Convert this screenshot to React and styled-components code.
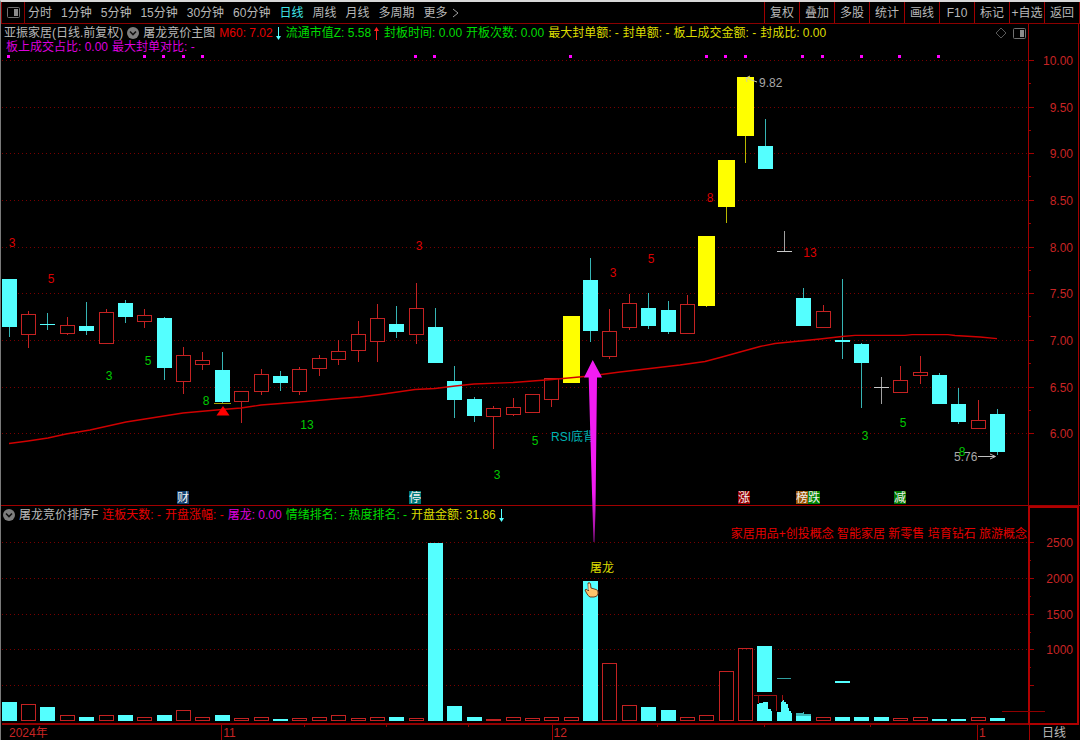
import styled, { createGlobalStyle } from "styled-components";

const GlobalStyle = createGlobalStyle`
  * {
    box-sizing: border-box;
  }
  body {
    margin: 0;
    background: #000;
    color: #b4b4b4;
    font-family: "Liberation Sans", "Noto Sans CJK SC", sans-serif;
    font-size: 12px;
  }
`;

const colors = {
  grey: "#b8b8b8",
  red: "#e60000",
  green: "#00dc00",
  yellow: "#dcdc00",
  magenta: "#dc00dc",
  cyan: "#54ffff",
};

const Window = styled.div`
  display: flex;
  flex-direction: column;
  border-top: 2px solid #d8d8d8;
  border-left: 1px solid #7a7a7a;
`;

const Toolbar = styled.nav`
  display: flex;
  justify-content: space-between;
  height: 22px;
  border: solid #8c0000;
  border-width: 0 1px 1px 1px;
`;
const Periods = styled.div`
  display: flex;
  gap: 9px;
`;
const Tools = styled.div`
  display: flex;
`;
const BarButton = styled.button`
  padding: 0;
  border: 0;
  background: none;
  font: inherit;
  line-height: 22px;
  white-space: nowrap;
  color: ${(props) => (props.$active ? "#3fe6e6" : "#b8b8b8")};
`;
const LayoutButton = styled(BarButton)`
  display: flex;
  align-items: center;
  justify-content: center;
  width: 23px;
  margin-right: -6px;
  border-right: 1px solid #8c0000;
`;
const MoreButton = styled(BarButton)`
  display: flex;
  align-items: center;
  gap: 4px;
`;
const ToolButton = styled(BarButton)`
  width: 35px;
  border-left: 1px solid #a00000;
`;

/* header text and drawing share one grid cell */
const Panel = styled.section`
  display: grid;
  grid-template-columns: 1fr;
  position: relative;
  z-index: ${(props) => props.$level};
`;
const Chart = styled.svg`
  grid-area: 1 / 1;
  display: block;
  width: 100%;
  height: auto;
  overflow: visible;
`;
const Header = styled.header`
  grid-area: 1 / 1;
  z-index: 1;
  align-self: start;
  padding: 2px 0 0 ${(props) => props.$inset}px;
`;
const Line = styled.div`
  display: flex;
  align-items: center;
  gap: 4px;
  height: 14px;
  padding-left: ${(props) => props.$indent || 0}px;
  line-height: 14px;
  white-space: nowrap;
`;
const Field = styled.span`
  display: flex;
  align-items: center;
  gap: 2px;
  color: ${(props) => colors[props.$tone]};
`;
const IconButton = styled.button`
  display: flex;
  padding: 0;
  border: 0;
  background: none;
`;
const Corner = styled.div`
  display: flex;
  align-items: center;
  gap: 6px;
  margin-left: auto;
  padding-right: 54px;
`;

const TimeAxis = styled.footer`
  display: grid;
  grid-template-columns: 220fr 330fr 425fr 52fr 51fr;
  height: 15px;
`;
const Month = styled.span`
  padding-left: ${(props) => props.$pad}px;
  border-left: 1px solid ${(props) => (props.$first ? "transparent" : "#a00000")};
  color: #c82424;
  line-height: 16px;
`;
const PeriodName = styled(Month)`
  color: #b8b8b8;
`;

const centerOf = (i) => Math.round(9 + i * 19.38 - 0.3);

// kind, high, body top, body bottom, low
const candles = [
  ["c", 279, 279, 327, 337],
  ["r", 311, 314, 335, 348],
  ["c", 313, 324, 325, 330],
  ["r", 317, 325, 334, 335],
  ["c", 302, 326, 331, 335],
  ["r", 309, 312, 344, 344],
  ["c", 300, 303, 317, 323],
  ["r", 309, 315, 322, 328],
  ["c", 317, 318, 368, 380],
  ["r", 347, 355, 382, 394],
  ["r", 352, 360, 365, 370],
  ["c", 352, 370, 402, 403],
  ["r", 391, 391, 402, 423],
  ["r", 369, 374, 392, 395],
  ["c", 371, 376, 383, 391],
  ["r", 367, 369, 392, 395],
  ["r", 355, 358, 369, 376],
  ["r", 340, 351, 360, 365],
  ["r", 321, 334, 351, 362],
  ["r", 304, 318, 342, 362],
  ["c", 306, 324, 332, 338],
  ["r", 283, 308, 335, 344],
  ["c", 308, 327, 363, 363],
  ["c", 366, 381, 400, 418],
  ["c", 397, 399, 416, 422],
  ["r", 406, 408, 417, 449],
  ["r", 398, 407, 415, 416],
  ["r", 394, 394, 413, 413],
  ["r", 378, 378, 400, 407],
  ["y", 316, 316, 383, 383],
  ["c", 258, 280, 331, 342],
  ["r", 309, 331, 357, 359],
  ["r", 294, 303, 328, 330],
  ["c", 293, 308, 326, 329],
  ["c", 301, 310, 332, 334],
  ["r", 295, 304, 334, 334],
  ["y", 236, 236, 306, 307],
  ["y", 160, 160, 207, 223],
  ["y", 77, 77, 136, 163],
  ["c", 119, 146, 169, 169],
  ["w", 231, 251, 252, 252],
  ["c", 288, 298, 326, 326],
  ["r", 305, 311, 328, 328],
  ["c", 279, 340, 342, 359],
  ["c", 343, 344, 363, 408],
  ["w", 377, 387, 388, 404],
  ["r", 366, 380, 393, 393],
  ["r", 356, 372, 376, 384],
  ["c", 373, 375, 404, 404],
  ["c", 388, 404, 422, 424],
  ["r", 400, 420, 429, 429],
  ["c", 409, 414, 452, 455],
];

const candleStyle = {
  c: { fill: "#54ffff", wick: "#36b4b4" },
  r: { fill: "#000", wick: "#c42222" },
  y: { fill: "#ffff00", wick: "#b8b800" },
  w: { fill: "#c8c8c8", wick: "#a0a0a0" },
};

// kind, top of the bar
const volumes = [
  ["c", 702], ["r", 704], ["c", 707], ["r", 715], ["c", 717], ["r", 715],
  ["c", 715], ["r", 717], ["c", 715], ["r", 710], ["r", 717], ["c", 715],
  ["r", 718], ["r", 717], ["c", 719], ["r", 718], ["r", 717], ["r", 715],
  ["r", 718], ["r", 717], ["c", 717], ["r", 718], ["c", 543], ["c", 706],
  ["c", 717], ["r", 719], ["r", 717], ["r", 718], ["r", 717], ["r", 717],
  ["c", 581], ["r", 663], ["r", 705], ["c", 707], ["c", 710], ["r", 717],
  ["r", 715], ["r", 671], ["r", 648], null, null, ["c", 715],
  ["r", 717], ["c", 717], ["c", 717], ["c", 717], ["r", 718], ["r", 717],
  ["c", 719], ["c", 719], ["r", 717], ["c", 718],
];

const signals = [8, 144, 163, 183, 202, 415, 434, 570, 706, 725, 745, 802, 822, 861, 899, 938];

const counts = [
  [12, 243, "3", "red"],
  [51, 279, "5", "red"],
  [419, 246, "3", "red"],
  [613, 273, "3", "red"],
  [651, 259, "5", "red"],
  [710, 198, "8", "red"],
  [810, 253, "13", "red"],
  [109, 376, "3", "green"],
  [148, 361, "5", "green"],
  [206, 401, "8", "green"],
  [307, 425, "13", "green"],
  [535, 441, "5", "green"],
  [497, 475, "3", "green"],
  [865, 436, "3", "green"],
  [903, 423, "5", "green"],
  [962, 452, "8", "green"],
];

const events = [
  [177, "财", "#123f70"],
  [409, "停", "#007a7a"],
  [738, "涨", "#960000"],
  [796, "榜", "#9a5200"],
  [808, "跌", "#008000"],
  [894, "减", "#007800"],
];

const prices = ["10.00", "9.50", "9.00", "8.50", "8.00", "7.50", "7.00", "6.50", "6.00"];
const amounts = ["2500", "2000", "1500", "1000", ""];

const average =
  "9,443.5 28,441 48,438 66,434 90,430 126,422 145,419 183,413 222,409.5 241,408 261,405 300,402 " +
  "340,398.5 360,397 380,394.5 415,389.5 435,388.5 455,386 474,384 513,382.5 552,379.5 590,376 " +
  "620,372 650,368.5 680,365 705,361.5 722,357 740,352 760,346.5 775,343.5 795,341.5 820,339 " +
  "842,336.5 855,335.4 905,335.4 912,334.6 948,334.6 955,335.5 980,337 997,338.6";

const LayoutIcon = ({ size = 13 }) => (
  <svg width={size} height="11" viewBox="0 0 13 11" fill="none" aria-hidden="true">
    <rect x="0.5" y="0.5" width="12" height="10" rx="1" stroke="#707070" />
    <rect x="7" y="2" width="4" height="7" fill="#8c8c8c" />
  </svg>
);

const CollapseIcon = () => (
  <svg width="12" height="12" viewBox="0 0 12 12" fill="none" aria-hidden="true">
    <circle cx="6" cy="6" r="6" fill="#7e7e7e" />
    <path d="M3 4.5 6 7.5 9 4.5" stroke="#111" strokeWidth="1.6" />
  </svg>
);

const Trend = ({ up }) => (
  <svg width="7" height="13" viewBox="0 0 7 13" aria-hidden="true">
    {up ? (
      <path d="M3 13V4H1L3.5 0 6 4H4V13Z" fill="#ff2020" />
    ) : (
      <path d="M3 0V9H1L3.5 13 6 9H4V0Z" fill="#54ffff" />
    )}
  </svg>
);

const Grid = ({ top, step, labels, bottom }) => (
  <g>
    {labels.map((label, i) => {
      const y = Math.round(top + i * step);
      return (
        <g key={i}>
          <path d={`M2 ${y + 0.5}H1028`} stroke="#780000" strokeDasharray="1 3" />
          <path d={`M1028 ${y + 0.5}h6`} stroke="#a00000" />
          {y + step / 2 < bottom && (
            <path d={`M1028 ${Math.round(y + step / 2) + 0.5}h3`} stroke="#a00000" />
          )}
          <text x="1073" y={y + 5} textAnchor="end" fill="#c82424">
            {label}
          </text>
        </g>
      );
    })}
  </g>
);

const Candle = ({ index, data }) => {
  const [kind, high, top, bottom, low] = data;
  const x = centerOf(index);
  const half = kind === "y" ? 8 : 7;
  const { fill, wick } = candleStyle[kind];
  return (
    <g>
      <path d={`M${x + 0.5} ${high}V${low}`} stroke={wick} />
      {kind === "r" ? (
        <rect x={x - 6.5} y={top + 0.5} width="14" height={bottom - top - 1} fill={fill} stroke={wick} />
      ) : (
        <rect x={x - half} y={top} width={half * 2 + 1} height={bottom - top} fill={fill} />
      )}
    </g>
  );
};

const Volume = ({ index, data }) => {
  const [kind, top] = data;
  const x = centerOf(index);
  return kind === "c" ? (
    <rect x={x - 7} y={top} width="15" height={721 - top} fill="#54ffff" />
  ) : (
    <rect x={x - 6.5} y={top + 0.5} width="14" height={720 - top} fill="none" stroke="#c42222" />
  );
};

const PriceChart = () => (
  <Chart viewBox="1 24 1079 482" role="img" aria-label="日线">
    <g shapeRendering="crispEdges">
      <Grid top={60} step={46.67} labels={prices} bottom={430} />
      <path d="M1028.5 24V505" stroke="#a00000" />
      <path d="M1078.5 24V505M1 505.5H1080" stroke="#a00000" />
      {signals.map((x) => (
        <rect key={x} x={x - 1} y="55" width="3" height="3" fill="#ff00ff" />
      ))}
      {candles.map((data, i) => (
        <Candle key={i} index={i} data={data} />
      ))}
    </g>
    <polyline points={average} fill="none" stroke="#d00000" strokeWidth="1.3" />

    <path d="M214 403.5H231" stroke="#a8a000" />
    <path d="M223 406 229.5 415.5H216.5Z" fill="#ff0000" />

    {counts.map(([x, y, value, tone]) => (
      <text key={`${x}-${y}`} x={x} y={y + 4} textAnchor="middle" fill={tone === "red" ? "#dc0000" : "#00c800"}>
        {value}
      </text>
    ))}

    <text x="759" y="87" fill="#a8a8a8">9.82</text>
    <path d="M757 82 746 78M750 76 746 78 747 82" stroke="#d0d0a0" fill="none" />
    <text x="954" y="461" fill="#a8a8a8">5.76</text>
    <path d="M978 456.5H995M990 454 995.5 456.5 990 459" stroke="#c0c0c0" fill="none" />
    <text x="551" y="441" fill="#00b4b4">RSI底背</text>

    {events.map(([x, name, fill]) => (
      <g key={name}>
        <rect x={x} y="491" width="12" height="13" fill={fill} />
        <text x={x} y="502" fill="#f0f0f0">{name}</text>
      </g>
    ))}

    <defs>
      <linearGradient id="shaft" x1="0" y1="377" x2="0" y2="543" gradientUnits="userSpaceOnUse">
        <stop offset="0.7" stopColor="#f21cf2" />
        <stop offset="1" stopColor="#8a108a" />
      </linearGradient>
    </defs>
    <path d="M592.7 360 602 377.5H597L595.5 510 594.5 542H593.5L592.5 510 588.7 377.5H584Z" fill="url(#shaft)" />
  </Chart>
);

const AuctionChart = () => (
  <Chart viewBox="1 506 1079 219" role="img" aria-label="屠龙竞价排序F">
    <g shapeRendering="crispEdges">
      <Grid top={542} step={35.75} labels={amounts} bottom={680} />
      {/* the last grid line breaks off at the repainted area */}
      <rect x="719" y="684" width="309" height="3" fill="#000" />
      {volumes.map((data, i) => data && <Volume key={i} index={i} data={data} />)}
      <rect x="757" y="646" width="15" height="46" fill="#54ffff" />
      <path d="M777 678.5H791" stroke="#2f9f9f" />
      <path d="M835 681.5H850" stroke="#54ffff" strokeWidth="2" />
      <path d="M2 724H1028" stroke="#900000" strokeWidth="2" />
      <path d="M304.5 724v3M386.5 724v3M468.5 724v3M657.5 724v3M764.5 724v3M870.5 724v3" stroke="#900000" />
      <rect x="1029" y="507" width="49" height="217" fill="none" stroke="#b00000" strokeWidth="2" />
      <path d="M1002 711.5H1045" stroke="#900000" />
      <path d="M757 721V704H759V703H763V702H768V709H771V711H772V721Z" fill="#54ffff" />
      <path d="M777 721V712H781V702H782V700H784V702H786V704H788V708H789V711H791V713H792V721Z" fill="#54ffff" />
      <path d="M796 715V713H803V712H804V714H811V716H796Z" fill="#3cb8b8" />
      <path d="M754 695.5H776M758.5 695V703M776.5 695V711M782.5 695V701" stroke="#a01010" fill="none" />
    </g>

    <text x="1027" y="538" textAnchor="end" fill="#e60000">
      家居用品+创投概念 智能家居 新零售 培育钻石 旅游概念
    </text>
    <text x="590" y="572" fill="#dcdc00">屠龙</text>

    <path
      d="M588 583Q590 582 590.5 584L591 588 596 589.5Q598 590 598 592V594Q597 597 594 597H590Q588 596 586.5 593L585 590Q586 588.5 587.5 590L588.5 591Z"
      fill="#ffc46a"
      stroke="#6b3a1c"
    />
    <path d="M589 584V590" stroke="#ffe9c8" />
  </Chart>
);

const periods = ["分时", "1分钟", "5分钟", "15分钟", "30分钟", "60分钟", "日线", "周线", "月线", "多周期"];
const tools = ["复权", "叠加", "多股", "统计", "画线", "F10", "标记", "+自选", "返回"];

const App = () => {
  return (
    <>
      <GlobalStyle />
      <Window>
        <Toolbar>
          <Periods>
            <LayoutButton aria-label="布局">
              <LayoutIcon />
            </LayoutButton>
            {periods.map((name) => (
              <BarButton key={name} $active={name === "日线"}>
                {name}
              </BarButton>
            ))}
            <MoreButton>
              更多
              <svg width="7" height="10" viewBox="0 0 7 10" fill="none" aria-hidden="true">
                <path d="M1 1 6 5 1 9" stroke="#a0a0a0" />
              </svg>
            </MoreButton>
          </Periods>
          <Tools>
            {tools.map((name) => (
              <ToolButton key={name}>{name}</ToolButton>
            ))}
          </Tools>
        </Toolbar>

        <Panel $level={1}>
          <Header $inset={3}>
            <Line>
              <Field $tone="grey">亚振家居(日线.前复权)</Field>
              <IconButton aria-label="指标">
                <CollapseIcon />
              </IconButton>
              <Field $tone="grey">屠龙竞价主图</Field>
              <Field $tone="red">
                M60: 7.02
                <Trend />
              </Field>
              <Field $tone="green">
                流通市值Z: 5.58
                <Trend up />
              </Field>
              <Field $tone="green">封板时间: 0.00</Field>
              <Field $tone="green">开板次数: 0.00</Field>
              <Field $tone="yellow">最大封单额: -</Field>
              <Field $tone="yellow">封单额: -</Field>
              <Field $tone="yellow">板上成交金额: -</Field>
              <Field $tone="yellow">封成比: 0.00</Field>
              <Corner>
                <svg width="12" height="12" viewBox="0 0 12 12" fill="none" aria-hidden="true">
                  <path d="M6 1 11 6 6 11 1 6Z" stroke="#585858" />
                </svg>
                <LayoutIcon />
              </Corner>
            </Line>
            <Line $indent={2}>
              <Field $tone="magenta">板上成交占比: 0.00</Field>
              <Field $tone="magenta">最大封单对比: -</Field>
            </Line>
          </Header>
          <PriceChart />
        </Panel>

        <Panel $level={0}>
          <Header $inset={2}>
            <Line>
              <IconButton aria-label="指标">
                <CollapseIcon />
              </IconButton>
              <Field $tone="grey">屠龙竞价排序F</Field>
              <Field $tone="red">连板天数: -</Field>
              <Field $tone="red">开盘涨幅: -</Field>
              <Field $tone="magenta">屠龙: 0.00</Field>
              <Field $tone="green">情绪排名: -</Field>
              <Field $tone="green">热度排名: -</Field>
              <Field $tone="yellow">
                开盘金额: 31.86
                <Trend />
              </Field>
            </Line>
          </Header>
          <AuctionChart />
        </Panel>

        <TimeAxis>
          <Month $pad={7} $first>
            2024年
          </Month>
          <Month $pad={1}>11</Month>
          <Month $pad={1}>12</Month>
          <Month $pad={1}>1</Month>
          <PeriodName $pad={12}>日线</PeriodName>
        </TimeAxis>
      </Window>
    </>
  );
};

export default App;
